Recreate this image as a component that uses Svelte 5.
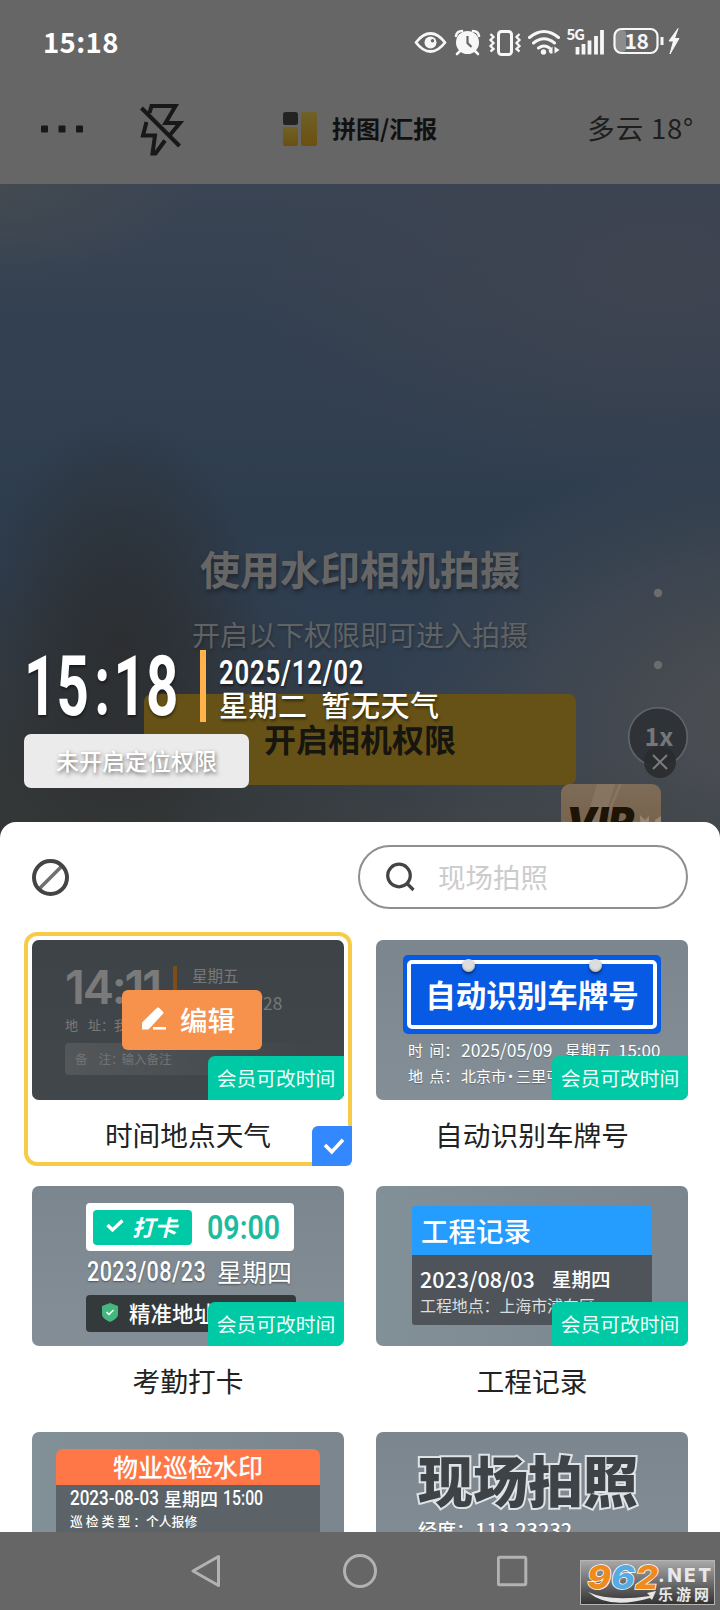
<script lang="ts">
  interface Template {
    id: string;
    name: string;
    memberOnly: boolean;
  }

  const templates: Template[] = [
    { id: 'weather', name: '时间地点天气', memberOnly: true },
    { id: 'plate', name: '自动识别车牌号', memberOnly: true },
    { id: 'clockin', name: '考勤打卡', memberOnly: true },
    { id: 'project', name: '工程记录', memberOnly: true },
    { id: 'patrol', name: '物业巡检水印', memberOnly: false },
    { id: 'site', name: '现场拍照', memberOnly: false }
  ];

  let selected = $state('weather');
  let keyword = $state('');
</script>

<div class="screen">
  <header>
    <div class="status">
      <span class="clock">15:18</span>
      <svg class="status-icons" width="270" height="34" viewBox="0 0 270 34" fill="none">
        <!-- eye -->
        <path d="M2 17.5C8 9.500 13 8.500 16.500 8.500s8.500 1 14.500 9c-6 8-11 9-14.500 9s-8.500-1-14.500-9z" stroke="#f7f7f7" stroke-width="2.800" stroke-linejoin="round" />
        <circle cx="16.500" cy="17.500" r="6" fill="#f7f7f7" />
        <circle cx="18.500" cy="15.800" r="1.700" fill="#666" />
        <!-- alarm -->
        <circle cx="53.500" cy="17.500" r="11.500" fill="#f7f7f7" />
        <path d="M42 11c.5-3 3-5 6-5M65 11c-.5-3-3-5-6-5M46 26l-3 3M61 26l3 3" stroke="#f7f7f7" stroke-width="2.600" stroke-linecap="round" />
        <path d="M53.500 11v7l4 4" stroke="#666" stroke-width="2.200" />
        <!-- vibrate -->
        <rect x="84.500" y="6.500" width="13" height="23" rx="3" stroke="#f7f7f7" stroke-width="3" />
        <path d="M76.500 9l3 3-3 3 3 3-3 3 3 3-3 2.500M105.500 9l-3 3 3 3-3 3 3 3-3 3 3 2.500" stroke="#f7f7f7" stroke-width="2.300" />
        <!-- wifi -->
        <path d="M115.500 12.500q14.500-12 29 0M119.500 18q10.500-8.500 21 0M124.500 23q5.500-4 11 0" stroke="#f7f7f7" stroke-width="3" stroke-linecap="round" />
        <circle cx="129.500" cy="27" r="2.700" fill="#f7f7f7" />
        <path d="M134.500 25.500l4-4v7h-2.500zM140.500 21.500v7l5-3.500z" fill="#f7f7f7" />
        <!-- signal -->
        <text x="152.500" y="15" class="net">5G</text>
        <path d="M163.500 22v7.500M169.500 19v10.500M175.500 15.500v14M182 11v18.500M188 5v24.500" stroke="#f7f7f7" stroke-width="3.800" />
        <!-- battery -->
        <rect x="201" y="5" width="11" height="22" rx="4" fill="#8c8c8c" />
        <rect x="200.500" y="4" width="43" height="24" rx="7" stroke="#f7f7f7" stroke-width="2.200" />
        <path d="M248 12v8" stroke="#f7f7f7" stroke-width="3" />
        <text x="210.500" y="24" class="level">18</text>
        <path d="M264 3.500l-9 12.500h4.500l-3.500 13 9-15.500h-4.500z" fill="#f7f7f7" stroke="#f7f7f7" />
      </svg>
    </div>
    <div class="toolbar">
      <svg class="more" width="44" height="8" viewBox="0 0 44 8" fill="#181818">
        <rect x="1" y=".5" width="7" height="7" rx="1" />
        <rect x="18.500" y=".5" width="7" height="7" rx="1" />
        <rect x="36" y=".5" width="7" height="7" rx="1" />
      </svg>
      <svg class="flash" width="46" height="54" viewBox="0 0 46 54" fill="none" stroke="#181818" stroke-width="4">
        <path d="M3.500 6l38 38" />
        <path d="M11.500 11l2-7H37.500L27.500 21H42L31.500 33.500M8.500 20L5 33.500h12L14.500 51.500h3L27 38.500" />
      </svg>
      <svg class="collage" width="34" height="34" viewBox="0 0 34 34">
        <defs>
          <linearGradient id="gold" x1="0" y1="0" x2="0" y2="1">
            <stop offset="0" stop-color="#6f6128" />
            <stop offset="1" stop-color="#6b5010" />
          </linearGradient>
        </defs>
        <rect x="0" y="0" width="15" height="13" rx="2.500" fill="#232323" />
        <rect x="0" y="15" width="15" height="19" rx="2" fill="url(#gold)" />
        <rect x="18" y="0" width="16" height="34" rx="2" fill="url(#gold)" />
      </svg>
      <span class="collage-label">拼图/汇报</span>
      <span class="temp">多云 18°</span>
    </div>
  </header>

  <section class="viewfinder">
    <h1>使用水印相机拍摄</h1>
    <p class="hint">开启以下权限即可进入拍摄</p>
    <button class="grant">开启相机权限</button>

    <svg class="zoom-rail" width="70" height="210" viewBox="0 0 70 210" fill="none">
      <circle cx="35" cy="13" r="4.200" fill="#6c6c6d" />
      <circle cx="35" cy="85" r="4.200" fill="#6c6c6d" />
      <circle cx="35" cy="157" r="29.300" fill="#2f3337" stroke="#62666a" stroke-width="1.600" />
      <text x="36" y="166" text-anchor="middle" class="ratio">1x</text>
      <circle cx="37" cy="182" r="16" fill="#2a2c2e" fill-opacity=".93" />
      <path d="M30 175l14 14M44 175l-14 14" stroke="#7b7c7d" stroke-width="2" />
    </svg>

    <div class="vip">
      <svg width="100" height="60" viewBox="0 0 100 60">
        <path d="M36 0h18L42 40H24zM58 0h3L44 40h-3z" fill="#8b7966" opacity=".7" />
        <path d="M79 31l5 5 4-4v28h-8zM94 36l6-4v28h-6z" fill="#978674" />
        <text x="5" y="51" class="vip-text">VIP</text>
      </svg>
    </div>

    <div class="watermark">
      <div class="wm-row">
        <span class="wm-time"><i>15</i><i class="colon">:</i><i>18</i></span>
        <span class="wm-bar"></span>
        <div class="wm-side">
          <span class="wm-date">2025/12/02</span>
          <span class="wm-day">星期二<b></b>暂无天气</span>
        </div>
      </div>
      <button class="wm-place">未开启定位权限</button>
    </div>
  </section>

  <section class="sheet">
    <div class="sheet-head">
      <svg width="37" height="37" viewBox="0 0 37 37" fill="none">
        <path d="M8 29L29 8" stroke="#707070" stroke-width="3.500" />
        <circle cx="18.500" cy="18.500" r="16.500" stroke="#444" stroke-width="4" />
      </svg>
      <label class="search">
        <svg width="30" height="30" viewBox="0 0 30 30" fill="none" stroke="#444" stroke-width="3.200">
          <circle cx="13" cy="13.500" r="11.300" />
          <path d="M20.500 21l7 7" />
        </svg>
        <input placeholder="现场拍照" bind:value={keyword} />
      </label>
    </div>

    <div class="grid">
      {#each templates as tpl (tpl.id)}
        <!-- svelte-ignore a11y_click_events_have_key_events, a11y_no_static_element_interactions -->
        <div class="card" class:selected={selected === tpl.id} onclick={() => (selected = tpl.id)}>
          <div class="thumb {tpl.id}">
            {#if tpl.id === 'weather'}
              <div class="w-top">
                <span class="w-time">14:11</span>
                <span class="w-bar"></span>
                <div class="w-date"><span>星期五</span><span class="w-day">2023/04/28</span></div>
              </div>
              <div class="w-addr"><span>地</span><span>址：我</span></div>
              <div class="w-note"><span>备</span><span>注：</span><span>输入备注</span></div>
            {:else if tpl.id === 'plate'}
              <div class="sign">
                <i class="pin"></i><i class="pin right"></i>
                <div class="sign-inner">自动识别车牌号</div>
              </div>
              <div class="p-line"><span class="k">时 间：</span><span class="v">2025/05/09</span><span class="w">星期五</span><span class="t">15:00</span></div>
              <div class="p-line"><span class="k">地 点：</span><span>北京市<s>·</s>三里屯</span></div>
            {:else if tpl.id === 'clockin'}
              <div class="c-box">
                <div class="c-tag">
                  <svg width="18" height="14" viewBox="0 0 18 14" fill="none" stroke="#fff" stroke-width="3.400"><path d="M1.500 6l5 5L16.500 1.500" /></svg>
                  <em>打卡</em>
                </div>
                <span class="c-time">09:00</span>
              </div>
              <div class="c-date"><span class="num">2023/08/23</span><span>星期四</span></div>
              <div class="c-addr">
                <svg width="16" height="19" viewBox="0 0 16 19" fill="none">
                  <path d="M8 0l8 3v8c0 4-4 6-8 8-4-2-8-4-8-8V3z" fill="#43b77e" />
                  <path d="M4.500 9l2.500 2.500 4.500-4.500" stroke="#fff" stroke-width="1.500" />
                </svg>
                <span>精准地址定位</span>
              </div>
            {:else if tpl.id === 'project'}
              <div class="j-title">工程记录</div>
              <div class="j-body">
                <div class="j-date"><span>2023/08/03</span><span>星期四</span></div>
                <div class="j-addr">工程地点：上海市浦东区</div>
              </div>
            {:else if tpl.id === 'patrol'}
              <div class="x-title">物业巡检水印</div>
              <div class="x-body">
                <div class="x-date"><span class="num">2023-08-03</span><span>星期四</span><span class="num">15:00</span></div>
                <div class="x-type"><span class="spread">巡检类型：</span><span>个人报修</span></div>
              </div>
            {:else}
              <div class="s-title">现场拍照</div>
              <div class="s-line">经度：<span>113.23232</span></div>
            {/if}
            {#if selected === tpl.id}
              <div class="dim"></div>
              <button class="edit">
                <svg width="24" height="24" viewBox="0 0 24 24" fill="#fff">
                  <path d="M0 22.500v-7L15 .8q1-.8 2 0l4 4q1 1 0 2L6.500 22.500z" />
                  <rect x="11" y="20" width="13" height="2.600" />
                </svg>
                编辑
              </button>
            {/if}
            {#if tpl.memberOnly}<span class="member">会员可改时间</span>{/if}
          </div>
          <div class="name">{tpl.name}</div>
          {#if selected === tpl.id}
            <span class="tick">
              <svg width="22" height="18" viewBox="0 0 24 20" fill="none" stroke="#fff" stroke-width="4"><path d="M2 9l7.500 7.500L22 3" /></svg>
            </span>
          {/if}
        </div>
      {/each}
    </div>
  </section>

  <nav>
    <svg width="32" height="36" viewBox="0 0 32 36"><path d="M27.500 3.500v29L2 18z" /></svg>
    <svg width="36" height="36" viewBox="0 0 36 36"><circle cx="18" cy="18" r="15.500" /></svg>
    <svg width="32" height="36" viewBox="0 0 32 36"><rect x="1.300" y="4.300" width="27.500" height="27.500" rx="1.500" /></svg>
  </nav>

  <div class="site-logo">
    <svg width="133" height="43" viewBox="0 0 133 43">
      <text class="digits" x="6" y="27.500" textLength="71" lengthAdjust="spacingAndGlyphs"><tspan fill="#ef8a1d">9</tspan><tspan fill="#58abe0">6</tspan><tspan fill="#ef8a1d">2</tspan></text>
      <path d="M7 31q22 10 62 4l-3-3 9-2-4 9-2-2Q28 49 7 31z" fill="#e6e6e6" />
      <text x="77" y="21" textLength="53" class="net-text">.NET</text>
      <text x="77" y="39" textLength="51" class="cn-text">乐游网</text>
    </svg>
  </div>
</div>

<style>
  :global(body) {
    margin: 0;
    background: #666;
  }

  .screen {
    position: relative;
    width: 720px;
    height: 1610px;
    overflow: hidden;
    background: #666;
    font-family: 'Noto Sans CJK SC', sans-serif;
    color: #222;
  }

  button {
    border: none;
    padding: 0;
    font-family: inherit;
  }

  header {
    height: 184px;
  }

  .status {
    display: flex;
    justify-content: space-between;
    padding: 25px 36px 0 43px;
    height: 59px;
    box-sizing: border-box;
  }

  .clock {
    font-size: 27.5px;
    font-weight: 700;
    line-height: 32px;
    letter-spacing: 0.4px;
    color: #fff;
  }

  .net {
    font: 700 15px 'Noto Sans CJK SC', sans-serif;
    letter-spacing: -1px;
    fill: #f7f7f7;
  }

  .level {
    font: 700 21px 'Noto Sans CJK SC', sans-serif;
    letter-spacing: -0.5px;
    fill: #f7f7f7;
  }

  .toolbar {
    display: flex;
    align-items: center;
    height: 140px;
    padding: 0 26px 0 40px;
  }

  .flash {
    margin-left: 54px;
  }

  .collage {
    margin-left: 99px;
  }

  .collage-label {
    margin: -4px 0 0 15px;
    font-size: 24px;
    font-weight: 700;
    color: #111;
  }

  .temp {
    margin: -4px 0 0 auto;
    font-size: 27.5px;
    letter-spacing: 0.8px;
    color: #1e1e1e;
  }

  .viewfinder {
    position: relative;
    display: flex;
    flex-direction: column;
    align-items: center;
    height: 654px;
    background:
      radial-gradient(ellipse 150px 230px at 120px 460px, rgba(43, 44, 45, 0.85), rgba(43, 44, 45, 0.5) 50%, transparent),
      radial-gradient(ellipse 420px 260px at 60px 640px, #343738 25%, transparent),
      radial-gradient(ellipse 420px 120px at 420px 680px, #414545 20%, transparent),
      radial-gradient(ellipse 390px 280px at 770px 540px, #494c51 20%, transparent),
      radial-gradient(ellipse 200px 100px at 0 0, #434a51, transparent),
      radial-gradient(ellipse 420px 220px at 660px 90px, #3e4450 10%, transparent),
      linear-gradient(#3a4453, #334051 25%, #2e3d4e 50%, #2f3e50 70%, #344150);
  }

  h1 {
    margin: 357px 0 0;
    font-size: 40px;
    font-weight: 700;
    line-height: 54px;
    color: #666;
    text-shadow: 1px 3px 4px rgba(0, 0, 0, 0.35);
  }

  .hint {
    margin: 19px 0 0;
    font-size: 28px;
    line-height: 40px;
    color: #606365;
    text-shadow: 1px 2px 3px rgba(0, 0, 0, 0.25);
  }

  .grant {
    width: 432px;
    height: 91px;
    margin-top: 40px;
    padding-bottom: 4px;
    border-radius: 8px;
    background: #665216;
    color: #16150f;
    font-size: 32px;
    font-weight: 700;
  }

  .zoom-rail {
    position: absolute;
    left: 623px;
    top: 396px;
  }

  .ratio {
    font: 700 25px 'Noto Sans CJK SC', sans-serif;
    fill: #75787a;
  }

  .vip {
    position: absolute;
    left: 561px;
    top: 600px;
    width: 100px;
    height: 60px;
    border-radius: 9px;
    overflow: hidden;
    background: linear-gradient(#7d6c59, #755f47);
  }

  .vip-text {
    font: italic 900 39px 'Inter', sans-serif;
    fill: #1d1406;
  }

  .watermark {
    position: absolute;
    left: 24px;
    top: 466px;
    color: #fff;
    text-shadow: 1px 2px 3px rgba(0, 0, 0, 0.5);
  }

  .wm-row {
    display: flex;
    height: 72px;
  }

  .wm-time {
    display: flex;
    width: 176px;
    font-family: 'Roboto', sans-serif;
    font-size: 83px;
    font-weight: 700;
    line-height: 73px;
    transform: scaleX(0.68);
    transform-origin: left;
  }

  .wm-time i {
    font-style: normal;
  }

  .wm-time .colon {
    margin: 0 5px 0 8px;
    line-height: 73px;
  }

  .wm-bar {
    width: 6px;
    background: #ffb34a;
  }

  .wm-side {
    display: flex;
    flex-direction: column;
    margin-left: 13px;
  }

  .wm-date {
    width: 150px;
    font-family: 'Roboto', sans-serif;
    font-size: 34px;
    font-weight: 600;
    line-height: 44px;
    white-space: nowrap;
    letter-spacing: 1px;
    transform: scaleX(0.76);
    transform-origin: left;
  }

  .wm-day {
    margin-top: -7px;
    font-size: 29px;
    font-weight: 500;
    line-height: 34px;
    letter-spacing: 0.5px;
    white-space: nowrap;
  }

  .wm-day b {
    display: inline-block;
    width: 14px;
  }

  .wm-place {
    width: 225px;
    height: 54px;
    margin-top: 12px;
    padding-bottom: 2px;
    border-radius: 7px;
    background: #ebebeb;
    color: #fff;
    font-size: 23px;
    font-weight: 500;
    text-shadow: 1px 2px 4px rgba(0, 0, 0, 0.55);
  }

  .sheet {
    position: relative;
    height: 710px;
    margin-top: -16px;
    border-radius: 16px 16px 0 0;
    overflow: hidden;
    background: #fff;
  }

  .sheet-head {
    display: flex;
    align-items: center;
    justify-content: space-between;
    padding: 23px 32px 0;
  }

  .search {
    display: flex;
    align-items: center;
    box-sizing: border-box;
    width: 330px;
    height: 64px;
    padding-left: 26px;
    border: 2px solid #8f8f8f;
    border-radius: 32px;
  }

  .search input {
    width: 200px;
    margin: 0 0 2px 22px;
    padding: 0;
    border: none;
    outline: none;
    background: none;
    font-family: inherit;
    font-size: 27.5px;
  }

  .search input::placeholder {
    color: #ccc;
    opacity: 1;
  }

  .grid {
    display: grid;
    grid-template-columns: 328px 328px;
    gap: 12px 16px;
    padding: 23px 24px 0;
  }

  .card {
    position: relative;
    box-sizing: border-box;
    height: 234px;
    padding: 4px;
    border: 4px solid transparent;
    border-radius: 13px;
  }

  .card.selected {
    border-color: #f8cb46;
  }

  .name {
    font-size: 27.7px;
    line-height: 40px;
    margin-top: 14px;
    text-align: center;
  }

  .thumb {
    position: relative;
    box-sizing: border-box;
    width: 312px;
    height: 160px;
    border-radius: 7px;
    overflow: hidden;
    background: linear-gradient(#7c868e, #838e96);
    color: #fff;
    white-space: nowrap;
  }

  .thumb.project,
  .thumb.patrol {
    background: linear-gradient(90deg, #829098, #7b858d);
  }

  .member {
    position: absolute;
    right: 0;
    bottom: 0;
    width: 136px;
    height: 44px;
    border-radius: 7px 0 7px 0;
    background: #00caa5;
    color: #f0fffb;
    font-size: 19.8px;
    line-height: 43px;
    text-align: center;
  }

  .dim {
    position: absolute;
    inset: 0;
    background: rgba(0, 0, 0, 0.5);
  }

  .edit {
    position: absolute;
    left: 90px;
    top: 50px;
    display: flex;
    align-items: center;
    gap: 14px;
    width: 140px;
    height: 60px;
    padding: 0 0 2px 20px;
    border-radius: 6px;
    background: #f6924c;
    color: #fff;
    font-size: 27.5px;
    font-weight: 500;
  }

  .tick {
    position: absolute;
    right: -4px;
    bottom: -4px;
    display: grid;
    place-items: center;
    width: 40px;
    height: 40px;
    padding-left: 4px;
    box-sizing: border-box;
    border-radius: 6px 0 6px 0;
    background: #3388ff;
  }

  /* time / place / weather */
  .weather {
    padding: 26px 0 0 33px;
  }

  .w-top {
    display: flex;
    height: 46px;
    color: #f4f4f4;
  }

  .w-time {
    width: 108px;
    font-family: 'Inter', sans-serif;
    font-size: 47px;
    font-weight: 600;
    line-height: 41px;
    letter-spacing: -2.2px;
  }

  .w-bar {
    width: 4px;
    background: #ff9b35;
  }

  .w-date {
    display: flex;
    flex-direction: column;
    justify-content: space-between;
    margin-left: 15px;
    font-size: 15.5px;
    line-height: 18px;
    color: #eee;
  }

  .w-day {
    font-size: 17.3px;
  }

  .w-addr {
    display: flex;
    gap: 10px;
    font-size: 13px;
    line-height: 24px;
    margin-top: 1px;
    color: #eee;
  }

  .w-note {
    display: flex;
    align-items: center;
    height: 32px;
    margin-top: 6px;
    padding: 0 0 2px 10px;
    box-sizing: border-box;
    border-radius: 4px;
    background: linear-gradient(90deg, rgba(255, 255, 255, 0.3), transparent 90%);
    font-size: 12.5px;
    color: #e4e4e4;
  }

  .w-note span:first-child {
    margin-right: 11px;
  }

  .weather .w-note span:last-child {
    margin-left: -2px;
  }

  /* plate sign */
  .plate {
    padding: 15px 0 0 27px;
  }

  .sign {
    position: relative;
    box-sizing: border-box;
    width: 258px;
    height: 79px;
    padding: 5px 4px;
    border-radius: 5px;
    background: #075ae3;
  }

  .sign-inner {
    box-sizing: border-box;
    height: 69px;
    border: 4px solid #fff;
    border-radius: 5px;
    font-size: 30.5px;
    font-weight: 700;
    line-height: 61px;
    text-align: center;
  }

  .pin {
    position: absolute;
    left: 59px;
    top: 4px;
    width: 13px;
    height: 13px;
    border-radius: 50%;
    background: radial-gradient(circle at 50% 40%, #ddd 45%, #999);
    box-shadow: 0 2px 3px rgba(0, 0, 0, 0.5);
  }

  .pin.right {
    left: 186px;
  }

  .p-line {
    display: flex;
    height: 26px;
    padding-left: 5px;
    font-size: 15px;
    line-height: 32px;
    text-shadow: 0 1px 1px rgba(0, 0, 0, 0.25);
  }

  .p-line .k {
    width: 53px;
    word-spacing: 3px;
  }

  .p-line .v {
    width: 104px;
    font-size: 17.5px;
  }

  .p-line .w {
    width: 53px;
    font-size: 15.5px;
  }

  .p-line .t {
    font-size: 17px;
  }

  .p-line s {
    display: inline-block;
    width: 9px;
    margin-right: 1px;
    text-align: center;
    text-decoration: none;
    text-indent: -3px;
  }

  /* clock in */
  .clockin {
    padding: 17px 0 0 54px;
  }

  .c-box {
    display: flex;
    align-items: center;
    box-sizing: border-box;
    width: 208px;
    height: 48px;
    padding-left: 7px;
    border-radius: 4px;
    background: #fff;
  }

  .c-tag {
    display: flex;
    align-items: center;
    gap: 8px;
    box-sizing: border-box;
    width: 99px;
    height: 35px;
    padding: 0 0 2px 13px;
    border-radius: 4px;
    background: #00caa5;
    font-size: 22.5px;
    font-weight: 700;
  }

  .c-time {
    margin-left: 15px;
    font-family: 'Roboto', sans-serif;
    font-size: 34px;
    font-weight: 600;
    color: #1fba9d;
    transform: scaleX(0.84);
    transform-origin: left;
  }

  .c-date {
    display: flex;
    margin-top: 2px;
    font-size: 25px;
    line-height: 36px;
    text-shadow: 0 1px 2px rgba(0, 0, 0, 0.4);
  }

  .c-date .num {
    width: 130px;
    margin-left: 1px;
    font-family: 'Roboto', sans-serif;
    font-size: 27px;
    font-weight: 500;
    letter-spacing: 0.5px;
    line-height: 39px;
    transform: scaleX(0.8);
    transform-origin: left;
  }

  .c-addr {
    display: flex;
    align-items: center;
    gap: 11px;
    box-sizing: border-box;
    width: 210px;
    height: 37px;
    margin-top: 3px;
    padding: 0 0 2px 16px;
    border-radius: 4px;
    background: #34393c;
    font-size: 21.5px;
    font-weight: 500;
  }

  /* project record */
  .project {
    padding: 20px 0 0 36px;
  }

  .j-title {
    box-sizing: border-box;
    width: 240px;
    height: 49px;
    padding-left: 9px;
    border-radius: 3px 3px 0 0;
    background: #259dff;
    font-size: 27.5px;
    font-weight: 500;
    line-height: 49px;
  }

  .j-body {
    box-sizing: border-box;
    width: 240px;
    height: 70px;
    padding-left: 8px;
    border-radius: 0 0 3px 3px;
    background: #4e545a;
  }

  .j-date {
    display: flex;
    gap: 14px;
    padding-top: 10px;
    font-size: 19.5px;
    font-weight: 500;
    line-height: 27px;
  }

  .j-date span:first-child {
    width: 118px;
    font-size: 21.5px;
  }

  .j-addr {
    font-size: 15.9px;
    line-height: 28px;
    color: #dcdedf;
  }

  /* property patrol */
  .patrol {
    padding: 17px 0 0 24px;
  }

  .x-title {
    width: 264px;
    height: 36px;
    border-radius: 7px 7px 0 0;
    background: #ff7747;
    font-size: 25px;
    font-weight: 500;
    line-height: 34px;
    text-align: center;
  }

  .x-body {
    width: 250px;
    height: 90px;
    padding-left: 14px;
    background: #5b6268;
  }

  .x-date {
    display: flex;
    font-size: 18px;
    font-weight: 500;
    line-height: 27px;
  }

  .x-date .num {
    width: 94px;
    font-family: 'Roboto', sans-serif;
    font-size: 20px;
    transform: scaleX(0.85);
    transform-origin: left;
  }

  .x-date .num:last-child {
    margin-left: 5px;
    transform: scaleX(0.79);
  }

  .x-type {
    display: flex;
    font-size: 12.8px;
    font-weight: 500;
    line-height: 17px;
  }

  .spread {
    width: 76px;
    letter-spacing: 3px;
  }

  /* site photo */
  .site {
    padding: 12px 0 0 42px;
  }

  .s-title {
    font-size: 55px;
    font-weight: 900;
    line-height: 68px;
    color: #3e4347;
    -webkit-text-stroke: 4px #e0e3e6;
    paint-order: stroke fill;
  }

  .s-line {
    margin-top: 4px;
    font-size: 19px;
    font-weight: 500;
    line-height: 28px;
    text-shadow: 0 1px 1px rgba(0, 0, 0, 0.3);
  }

  .s-line span {
    font-size: 20px;
  }

  nav {
    display: flex;
    align-items: center;
    gap: 119px;
    height: 78px;
    padding-left: 191px;
    fill: none;
    stroke: #b2b2b2;
    stroke-width: 3;
    stroke-linejoin: round;
  }

  .site-logo {
    position: absolute;
    right: 5px;
    bottom: 5px;
    width: 133px;
    height: 43px;
    border: 1px solid #b5b5b5;
    background: linear-gradient(#a8a8a8, #333);
  }

  .digits {
    font: italic 800 33px 'Inter', sans-serif;
    stroke: #fff;
    stroke-width: 1.5px;
    paint-order: stroke fill;
  }

  .net-text {
    font: 800 19px 'Inter', sans-serif;
    fill: #e8e8e8;
  }

  .cn-text {
    font: 700 15px 'Noto Sans CJK SC', sans-serif;
    fill: #e8e8e8;
  }
</style>
